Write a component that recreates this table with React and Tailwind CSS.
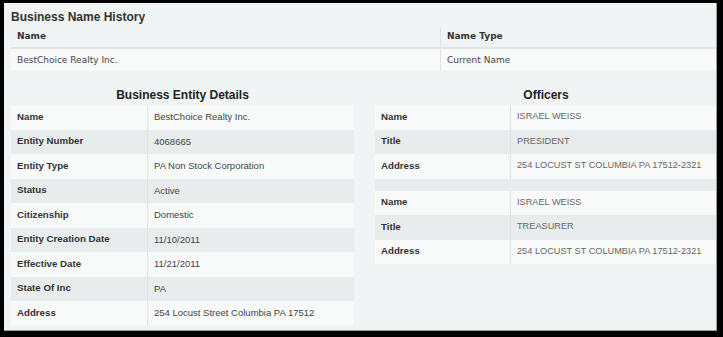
import React from 'react';

const entity = [
  ['Name', 'BestChoice Realty Inc.'],
  ['Entity Number', '4068665'],
  ['Entity Type', 'PA Non Stock Corporation'],
  ['Status', 'Active'],
  ['Citizenship', 'Domestic'],
  ['Entity Creation Date', '11/10/2011'],
  ['Effective Date', '11/21/2011'],
  ['State Of Inc', 'PA'],
  ['Address', '254 Locust Street Columbia PA 17512'],
];

const officers = [
  [
    ['Name', 'ISRAEL WEISS'],
    ['Title', 'PRESIDENT'],
    ['Address', '254 LOCUST ST COLUMBIA PA 17512-2321'],
  ],
  [
    ['Name', 'ISRAEL WEISS'],
    ['Title', 'TREASURER'],
    ['Address', '254 LOCUST ST COLUMBIA PA 17512-2321'],
  ],
];

function Row({ label, value, i, labelW, valueCls }) {
  return (
    <div className={`flex h-[24.5px] items-center ${i % 2 ? 'bg-[#e8ecec]' : 'bg-[#f8fafa]'}`}>
      <div className={`${labelW} shrink-0 h-full flex items-center pl-[6px] border-r border-[#dde2e2] font-bold text-[9.7px] text-[#333]`}>{label}</div>
      <div className={`pl-[6px] whitespace-nowrap ${valueCls}`}>{value}</div>
    </div>
  );
}

export default function App() {
  return (
    <div className="w-[723px] h-[337px] bg-black pt-[3px] pl-[4px] overflow-hidden">
      <div className="w-[713px] h-[328px] bg-[#f1f4f4] border-r border-b border-[#9a9e9e] overflow-hidden pl-[7px]">
        <h2 className="pt-[7px] h-[24px] text-[12px] leading-[15px] font-bold text-[#333]" style={{ fontFamily: '"Liberation Sans", Arial, sans-serif' }}>
          Business Name History
        </h2>

        <div className="text-[9px] text-[#444]" style={{ fontFamily: '"DejaVu Sans", Verdana, sans-serif' }}>
          <div className="flex h-[22px] border-b-2 border-[#e1e5e5]">
            <div className="w-[430px] shrink-0 border-r border-[#dfe3e3] flex items-center pl-[6px] font-bold text-[#333]">Name</div>
            <div className="flex items-center pl-[6px] font-bold text-[#333]">Name Type</div>
          </div>
          <div className="flex h-[22px] bg-[#f8fafa]">
            <div className="w-[430px] shrink-0 border-r border-[#dfe3e3] flex items-center pl-[6px] pt-[2px]">BestChoice Realty Inc.</div>
            <div className="flex items-center pl-[6px] pt-[2px]">Current Name</div>
          </div>
        </div>

        <div className="flex gap-[21px] mt-[17px]" style={{ fontFamily: '"Liberation Sans", Arial, sans-serif' }}>
          <div className="w-[343px] shrink-0">
            <h3 className="text-center text-[12px] leading-[15px] font-bold text-[#222] h-[17px]">Business Entity Details</h3>
            <div>
              {entity.map(([l, v], i) => (
                <Row key={l} label={l} value={v} i={i} labelW="w-[137px]" valueCls="text-[9.5px] text-[#444]" />
              ))}
            </div>
          </div>
          <div className="w-[342px] shrink-0">
            <h3 className="text-center text-[12px] leading-[15px] font-bold text-[#222] h-[17px]">Officers</h3>
            {officers.map((group, g) => (
              <div key={g}>
                {g > 0 && <div className="h-[12px] bg-[#e8ecec]" />}
                {group.map(([l, v], i) => (
                  <Row key={l} label={l} value={v} i={i} labelW="w-[136px]" valueCls="text-[9.2px] text-[#666]" />
                ))}
              </div>
            ))}
          </div>
        </div>
      </div>
    </div>
  );
}
